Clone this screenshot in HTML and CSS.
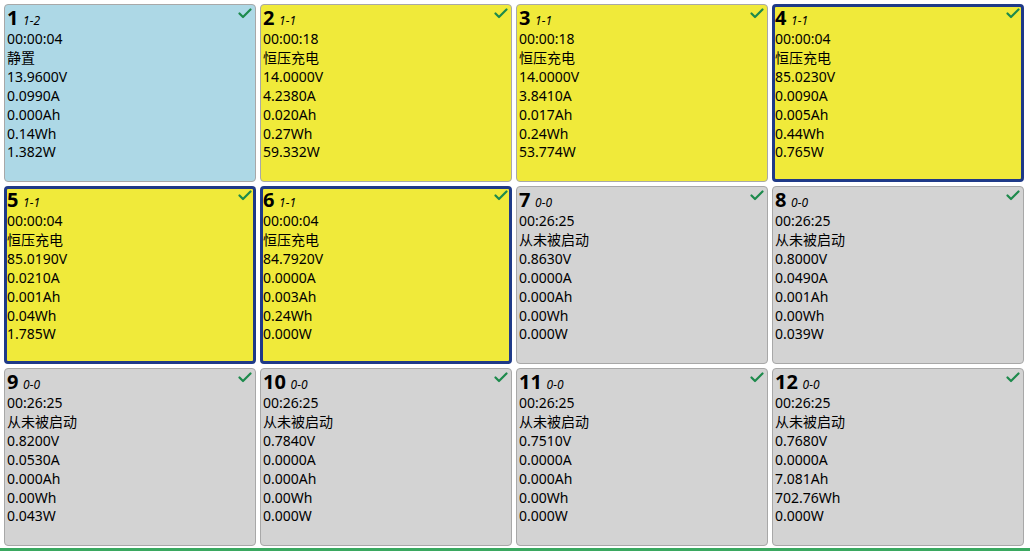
FILE: index.html
```html
<!DOCTYPE html>
<html lang="zh">
<head>
    <meta charset="UTF-8">
    <title>通道监控</title>
    <link rel="stylesheet" href="styles.css">
</head>
<body>
    <div id="grid">
        <div class="cell idle">
            <svg class="check" viewBox="0 0 14 11"><polyline points="1.5,5.5 5,9 12.5,1.5"/></svg>
            <div class="head"><b>1</b> <i>1-2</i></div>
            <div>00:00:04</div><div>静置</div><div>13.9600V</div><div>0.0990A</div><div>0.000Ah</div><div>0.14Wh</div><div>1.382W</div>
        </div>
        <div class="cell charge">
            <svg class="check" viewBox="0 0 14 11"><polyline points="1.5,5.5 5,9 12.5,1.5"/></svg>
            <div class="head"><b>2</b> <i>1-1</i></div>
            <div>00:00:18</div><div>恒压充电</div><div>14.0000V</div><div>4.2380A</div><div>0.020Ah</div><div>0.27Wh</div><div>59.332W</div>
        </div>
        <div class="cell charge">
            <svg class="check" viewBox="0 0 14 11"><polyline points="1.5,5.5 5,9 12.5,1.5"/></svg>
            <div class="head"><b>3</b> <i>1-1</i></div>
            <div>00:00:18</div><div>恒压充电</div><div>14.0000V</div><div>3.8410A</div><div>0.017Ah</div><div>0.24Wh</div><div>53.774W</div>
        </div>
        <div class="cell charge selected">
            <svg class="check" viewBox="0 0 14 11"><polyline points="1.5,5.5 5,9 12.5,1.5"/></svg>
            <div class="head"><b>4</b> <i>1-1</i></div>
            <div>00:00:04</div><div>恒压充电</div><div>85.0230V</div><div>0.0090A</div><div>0.005Ah</div><div>0.44Wh</div><div>0.765W</div>
        </div>
        <div class="cell charge selected">
            <svg class="check" viewBox="0 0 14 11"><polyline points="1.5,5.5 5,9 12.5,1.5"/></svg>
            <div class="head"><b>5</b> <i>1-1</i></div>
            <div>00:00:04</div><div>恒压充电</div><div>85.0190V</div><div>0.0210A</div><div>0.001Ah</div><div>0.04Wh</div><div>1.785W</div>
        </div>
        <div class="cell charge selected">
            <svg class="check" viewBox="0 0 14 11"><polyline points="1.5,5.5 5,9 12.5,1.5"/></svg>
            <div class="head"><b>6</b> <i>1-1</i></div>
            <div>00:00:04</div><div>恒压充电</div><div>84.7920V</div><div>0.0000A</div><div>0.003Ah</div><div>0.24Wh</div><div>0.000W</div>
        </div>
        <div class="cell off">
            <svg class="check" viewBox="0 0 14 11"><polyline points="1.5,5.5 5,9 12.5,1.5"/></svg>
            <div class="head"><b>7</b> <i>0-0</i></div>
            <div>00:26:25</div><div>从未被启动</div><div>0.8630V</div><div>0.0000A</div><div>0.000Ah</div><div>0.00Wh</div><div>0.000W</div>
        </div>
        <div class="cell off">
            <svg class="check" viewBox="0 0 14 11"><polyline points="1.5,5.5 5,9 12.5,1.5"/></svg>
            <div class="head"><b>8</b> <i>0-0</i></div>
            <div>00:26:25</div><div>从未被启动</div><div>0.8000V</div><div>0.0490A</div><div>0.001Ah</div><div>0.00Wh</div><div>0.039W</div>
        </div>
        <div class="cell off">
            <svg class="check" viewBox="0 0 14 11"><polyline points="1.5,5.5 5,9 12.5,1.5"/></svg>
            <div class="head"><b>9</b> <i>0-0</i></div>
            <div>00:26:25</div><div>从未被启动</div><div>0.8200V</div><div>0.0530A</div><div>0.000Ah</div><div>0.00Wh</div><div>0.043W</div>
        </div>
        <div class="cell off">
            <svg class="check" viewBox="0 0 14 11"><polyline points="1.5,5.5 5,9 12.5,1.5"/></svg>
            <div class="head"><b>10</b> <i>0-0</i></div>
            <div>00:26:25</div><div>从未被启动</div><div>0.7840V</div><div>0.0000A</div><div>0.000Ah</div><div>0.00Wh</div><div>0.000W</div>
        </div>
        <div class="cell off">
            <svg class="check" viewBox="0 0 14 11"><polyline points="1.5,5.5 5,9 12.5,1.5"/></svg>
            <div class="head"><b>11</b> <i>0-0</i></div>
            <div>00:26:25</div><div>从未被启动</div><div>0.7510V</div><div>0.0000A</div><div>0.000Ah</div><div>0.00Wh</div><div>0.000W</div>
        </div>
        <div class="cell off">
            <svg class="check" viewBox="0 0 14 11"><polyline points="1.5,5.5 5,9 12.5,1.5"/></svg>
            <div class="head"><b>12</b> <i>0-0</i></div>
            <div>00:26:25</div><div>从未被启动</div><div>0.7680V</div><div>0.0000A</div><div>7.081Ah</div><div>702.76Wh</div><div>0.000W</div>
        </div>
    </div>
    <div id="status"></div>
</body>
</html>
```

FILE: styles.css
```css
html, body {
    margin: 0;
    padding: 0;
    background: #fff;
}
body {
    width: 1030px;
    height: 551px;
    overflow: hidden;
    font-family: "Noto Sans", "Noto Sans CJK SC", sans-serif;
    font-size: 14px;
    color: #000;
}
#grid {
    display: grid;
    grid-template-columns: repeat(4, 252px);
    grid-template-rows: repeat(3, 178px);
    gap: 4px;
    padding: 4px 0 0 4px;
    height: 546px;
    box-sizing: border-box;
}
.cell {
    position: relative;
    border: 1px solid #a8a8a8;
    border-radius: 4px;
    padding: 2px;
    line-height: 18.9px;
    box-sizing: border-box;
}
.cell.idle {
    background: #add8e6;
}
.cell.charge {
    background: #f0ea3a;
}
.cell.off {
    background: #d3d3d3;
}
.cell.selected {
    border: 3px solid #1f3a88;
    padding: 0;
}
.head {
    height: 24px;
    line-height: 24px;
    margin-bottom: -1px;
    white-space: nowrap;
}
.head b {
    font-size: 20px;
    line-height: 22px;
}
.head i {
    font-size: 12px;
    line-height: 16px;
    margin-left: 1px;
}
.check {
    position: absolute;
    top: 3px;
    right: 3px;
    width: 14px;
    height: 11px;
}
.selected .check {
    top: 1px;
    right: 1px;
}
.check polyline {
    fill: none;
    stroke: #1d8a4c;
    stroke-width: 2.2;
    stroke-linecap: round;
    stroke-linejoin: round;
}
#status {
    height: 3px;
    margin-top: 2px;
    background: #3aa860;
}
```
